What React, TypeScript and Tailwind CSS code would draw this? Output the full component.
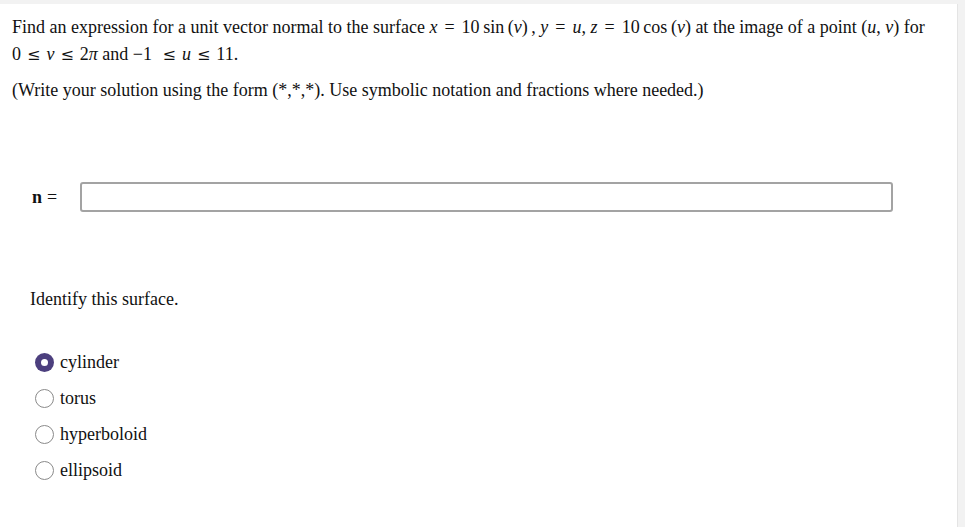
import React from "react";

const M = ({ children }: { children: React.ReactNode }) => <i className="italic">{children}</i>;
const Eq = () => <span className="mx-[7px]">=</span>;
const Le = () => (
	<span className="inline-block mx-[6px] leading-[20px] text-[16px]" style={{ fontFamily: '"DejaVu Serif", serif' }}>
		≤
	</span>
);

const options = ["cylinder", "torus", "hyperboloid", "ellipsoid"];

export default function App() {
	return (
		<div className="w-[965px] h-[527px] bg-[#f2f2f2] pt-1 flex overflow-hidden" style={{ fontFamily: '"Liberation Serif", serif' }}>
			<div className="w-[958px] h-full bg-white border-r border-[#e4e4e4] text-[18px] text-[#111] px-3 pt-[10px]">
				<p className="leading-[27px]">
					Find an expression for a unit vector normal to the surface <M>x</M><Eq />10&thinsp;sin&thinsp;(<M>v</M>)&thinsp;, <M>y</M><Eq /><M>u</M>, <M>z</M><Eq />10&thinsp;cos&thinsp;(<M>v</M>) at the image of a point (<M>u</M>, <M>v</M>) for
					<br />
					0<Le /><M>v</M><Le />2<M>π</M> and −1 <Le /><M>u</M><Le />11.
				</p>
				<p className="mt-[9px] leading-[27px]">(Write your solution using the form (*,*,*). Use symbolic notation and fractions where needed.)</p>

				<div className="mt-[78px] flex items-center pl-5">
					<span className="w-[48px]">
						<b className="font-bold">n</b>
						<span className="ml-[5px]">=</span>
					</span>
					<div className="w-[813px] h-[30px] rounded-[3px] border-2 border-[#a3a3a3]" />
				</div>

				<p className="mt-[74px] pl-[18px] leading-[27px]">Identify this surface.</p>

				<div className="mt-[38px] pl-[23px] flex flex-col gap-[14px]">
					{options.map((o, i) => (
						<div key={o} className="flex items-center gap-[6px] h-[22px]">
							{i === 0 ? (
								<span className="w-[19px] h-[19px] rounded-full bg-[#4c3f7e] flex items-center justify-center">
									<span className="w-[7px] h-[7px] rounded-full bg-white" />
								</span>
							) : (
								<span className="w-[19px] h-[19px] rounded-full border-[1.5px] border-[#8a8a8a] bg-white" />
							)}
							<span>{o}</span>
						</div>
					))}
				</div>
			</div>
		</div>
	);
}
